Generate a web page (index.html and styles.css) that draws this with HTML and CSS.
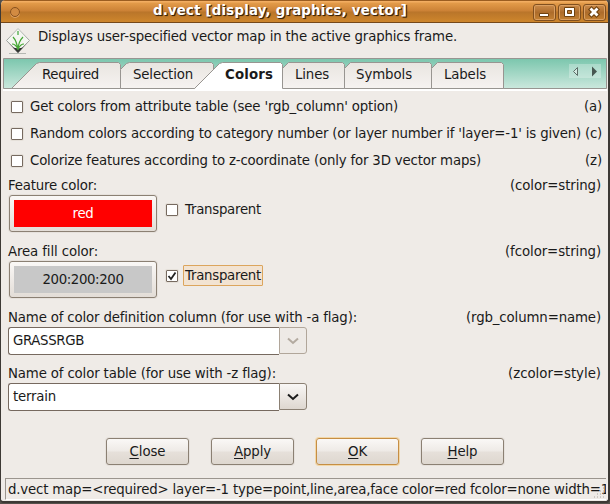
FILE: index.html
```
<!DOCTYPE html>
<html lang="en">
<head>
<meta charset="utf-8">
<title>d.vect [display, graphics, vector]</title>
<link rel="stylesheet" href="styles.css">
</head>
<body>
<div class="window">
  <header class="titlebar">
    <span class="menu-dot"></span>
    <h1 class="title"><span class="t" style="--w:254px">d.vect [display, graphics, vector]</span></h1>
    <div class="controls">
      <button class="control" aria-label="Minimize"><svg width="21" height="15" viewBox="0 0 21 15"><path d="M5.500 8.500h9v3h-9z" fill="#fff" stroke="#70420f"/></svg></button>
      <button class="control" aria-label="Maximize"><svg width="21" height="15" viewBox="0 0 21 15"><path d="M5.500 2.500h10v9h-10z" fill="#fff" stroke="#70420f"/><path d="M8.500 5.500h4v3h-4z" fill="#bc7830" stroke="#70420f"/></svg></button>
      <button class="control" aria-label="Close window"><svg width="21" height="15" viewBox="0 0 21 15"><path d="M7.500 4.500l5 5M12.500 4.500l-5 5" stroke="#70420f" stroke-width="5" stroke-linecap="square"/><path d="M7.500 4.500l5 5M12.500 4.500l-5 5" stroke="#fff" stroke-width="2.800" stroke-linecap="square"/></svg></button>
    </div>
  </header>

  <div class="intro">
    <svg class="logo" width="26" height="30" viewBox="0 0 26 30">
      <defs><linearGradient id="edge" x2="0" y2="1"><stop offset="0" stop-color="#bcc2bc"/><stop offset=".6" stop-color="#999d99"/><stop offset="1" stop-color="#111"/></linearGradient></defs>
      <path d="M13 1.500 24.500 13.500 13 25.500 1.500 13.500z" fill="#f4f6f1" stroke="url(#edge)"/>
      <path d="M8 20.500l5 5 5-5-5 1z" fill="#303430"/>
      <path d="M13 23C12 16 10 12 8 10M13 22c-2-4-4-5-6-5M13 23c0-8 3-11 5-13M13 22c2-4 4-5 6-5" fill="none" stroke="#45a735" stroke-width="1.200"/>
      <path d="M13 4v4" stroke="#4cab48" stroke-width="1.300"/>
      <path d="M4 26.500h17" stroke="#b4b7b2" stroke-width="1.200"/>
    </svg>
    <p class="t" style="--w:419px">Displays user-specified vector map in the active graphics frame.</p>
  </div>

  <nav class="tabs">
    <svg class="tab-shapes" width="605" height="34" viewBox="0 0 605 34">
      <defs>
        <linearGradient id="strip" x2="0" y2="1"><stop stop-color="#7bc6ad"/><stop offset="1" stop-color="#cbe8dd"/></linearGradient>
        <linearGradient id="tab" x2="0" y2="1"><stop stop-color="#e9e5e0"/><stop offset="1" stop-color="#f6f3f1"/></linearGradient>
      </defs>
      <path d="M0 31h604v2H0z" fill="#fff"/>
      <path d="M.500.500h603v30H.500z" fill="url(#strip)" stroke="#989591"/>
      <g fill="url(#tab)" stroke="#989591">
        <path d="M8.500 30.500 33.500 5.500 36.500 4.500H115.500L117.500 6.500V30.500z"/>
        <path d="M117.500 30.500V11.500L123.500 5.500 126.500 4.500H208.500L210.500 6.500V30.500z"/>
        <path d="M279.500 30.500V10.500L285.500 4.500H339.500L341.500 6.500V30.500z"/>
        <path d="M341.500 30.500V10.500L347.500 4.500H426.500L428.500 6.500V30.500z"/>
        <path d="M428.500 30.500V10.500L434.500 4.500H498.500L500.500 6.500V30.500z"/>
      </g>
      <path d="M191.500 31 216.500 5.500 219.500 4.500H277.500L279.500 6.500V31z" fill="#fff"/>
      <path d="M210 30.500h69V32h-88l1-1.500z" fill="#fff"/>
      <path d="M191.500 30.500 216.500 5.500 219.500 4.500H277.500L279.500 6.500V30.500" fill="none" stroke="#989591"/>
      <path d="M566 6h32v14h-32z" fill="#fff" opacity=".28"/>
      <path d="M574.500 9.500v8l-4-4z" fill="#d3e9e1" stroke="#5c6d66"/>
      <path d="M589 8.500v10l5-5z" fill="#465750"/>
    </svg>
    <a class="tab required"><span class="t" style="--w:57px">Required</span></a>
    <a class="tab selection"><span class="t" style="--w:60px">Selection</span></a>
    <a class="tab colors"><span class="t" style="--w:48px">Colors</span></a>
    <a class="tab lines"><span class="t" style="--w:34px">Lines</span></a>
    <a class="tab symbols"><span class="t" style="--w:56px">Symbols</span></a>
    <a class="tab labels"><span class="t" style="--w:42px">Labels</span></a>
  </nav>

  <main class="panel">
    <label class="option"><i class="check"></i><span class="t" style="--w:368px">Get colors from attribute table (see 'rgb_column' option)</span><span class="key t" style="--w:18px">(a)</span></label>
    <label class="option"><i class="check"></i><span class="t" style="--w:551px">Random colors according to category number (or layer number if 'layer=-1' is given)</span><span class="key t" style="--w:17px">(c)</span></label>
    <label class="option"><i class="check"></i><span class="t" style="--w:451px">Colorize features according to z-coordinate (only for 3D vector maps)</span><span class="key t" style="--w:17px">(z)</span></label>

    <section class="field color">
      <div class="caption"><span class="t" style="--w:89px">Feature color:</span><span class="key t" style="--w:91px">(color=string)</span></div>
      <div class="color-row">
        <button class="swatch-button"><span class="swatch red"><span class="t" style="--w:21px">red</span></span></button>
        <label class="transparent"><i class="check"></i><span class="choice"><span class="t" style="--w:76px">Transparent</span></span></label>
      </div>
    </section>
    <section class="field color">
      <div class="caption"><span class="t" style="--w:90px">Area fill color:</span><span class="key t" style="--w:96px">(fcolor=string)</span></div>
      <div class="color-row">
        <button class="swatch-button"><span class="swatch gray"><span class="t" style="--w:81px">200:200:200</span></span></button>
        <label class="transparent"><i class="check"><svg width="10" height="10" viewBox="0 0 10 10"><path d="M1.500 5 4 8 8.500 1.500" fill="none" stroke="#222" stroke-width="1.800"/></svg></i><span class="choice focused"><span class="t" style="--w:76px">Transparent</span></span></label>
      </div>
    </section>
    <section class="field select">
      <div class="caption"><span class="t" style="--w:349px">Name of color definition column (for use with -a flag):</span><span class="key t" style="--w:135px">(rgb_column=name)</span></div>
      <div class="combo"><div class="entry"><span class="t" style="--w:71px">GRASSRGB</span></div><button class="arrow disabled" aria-label="Choose column"><svg width="12" height="8" viewBox="0 0 12 8"><path d="M1 1.500 6 6 11 1.500"/></svg></button></div>
    </section>
    <section class="field select">
      <div class="caption"><span class="t" style="--w:268px">Name of color table (for use with -z flag):</span><span class="key t" style="--w:93px">(zcolor=style)</span></div>
      <div class="combo"><div class="entry"><span class="t" style="--w:43px">terrain</span></div><button class="arrow" aria-label="Choose color table"><svg width="12" height="8" viewBox="0 0 12 8"><path d="M1 1.500 6 6 11 1.500"/></svg></button></div>
    </section>
  </main>

  <div class="actions">
    <button class="action"><span class="t" style="--w:36px"><u>C</u>lose</span></button>
    <button class="action"><span class="t" style="--w:37px"><u>A</u>pply</span></button>
    <button class="action default"><span class="t" style="--w:19px"><u>O</u>K</span></button>
    <button class="action"><span class="t" style="--w:30px"><u>H</u>elp</span></button>
  </div>

  <footer class="status">
    <span class="status-text"><span class="t" style="--w:601px">d.vect map=&lt;required&gt; layer=-1 type=point,line,area,face color=red fcolor=none width=1</span></span>
    <svg class="grip" width="12" height="12" viewBox="0 0 12 12"><path d="M9 1h1M6 4h1M9 4h1M3 7h1M6 7h1M9 7h1M0 10h1M3 10h1M6 10h1M9 10h1" stroke="#aaa49c"/></svg>
  </footer>
</div>
<script src="script.js"></script>
</body>
</html>
```
FILE: styles.css
```
* { box-sizing: border-box; }
body { margin: 0; width: 610px; height: 504px; overflow: hidden; background: #55504a; font: 13.33px/16px "DejaVu Sans", sans-serif; color: #1a1a1a; }
button { padding: 0; margin: 0; font: inherit; color: inherit; }
h1, p { margin: 0; }
.t { display: inline-block; flex: none; white-space: pre; line-height: 16px; width: var(--w); }
.window { width: 610px; height: 503px; display: flex; flex-direction: column; background: #efebe7; border: solid #3d3935; border-width: 0 2px 2px 1px; border-radius: 5px 5px 4px 4px; overflow: hidden; }
.titlebar { display: flex; align-items: center; flex: none; height: 23px; border-top: 1px solid #9b5d20; border-bottom: 1px solid #754819; background: linear-gradient(#f2ad61 0 1px, #e39b49 2px, #cb8135 10px, #b9752a 11px, #ce862c 21px); }
.menu-dot { width: 10px; height: 10px; margin-left: 9px; border: 1px solid #87511e; border-radius: 50%; background: #d28b42; box-shadow: 0 1px #e2a463; }
.title { margin-left: 133px; font: bold 13.33px/16px "DejaVu Sans", sans-serif; color: #fff; text-shadow: 1px 1px 1px #3c2208, 1px 1px #513112; padding-bottom: 1px; }
.controls { display: flex; gap: 2px; margin: 1px 2px 0 auto; }
.control { display: flex; width: 23px; height: 17px; border: 1px solid #814f1e; border-radius: 3px; background: linear-gradient(#cd8c4b, #ad6c2b 50%, #c48132); box-shadow: inset 0 0 0 1px #dba062; }
.control svg { display: block; flex: none; }
.intro { display: flex; flex: none; height: 35px; padding: 6px 0 0 37px; position: relative; }
.logo { position: absolute; left: 4px; top: 4px; }
.tabs { position: relative; display: flex; flex: none; height: 34px; margin-left: 2px; width: 605px; }
.tab-shapes { position: absolute; left: 0; top: 0; }
.tab { position: relative; padding-top: 9px; }
.required { width: 117px; padding-left: 39px; }
.selection { width: 93px; padding-left: 13px; }
.colors { width: 69px; padding-left: 12px; font-weight: bold; }
.lines { width: 62px; padding-left: 13px; }
.symbols { width: 87px; padding-left: 12px; }
.labels { padding-left: 13px; }
.panel { flex: none; height: 346px; padding: 1px 7px 0 7px; }
.option { display: flex; align-items: center; height: 27px; padding-left: 3px; margin-right: -1px; }
.check { flex: none; width: 12px; height: 12px; margin-right: 7px; border: 1px solid #766a60; border-radius: 1px; background: #fff; box-shadow: 0 0 0 1px #e5e0d9; }
.check svg { display: block; }
.key { margin-left: auto; }
.field.color { height: 66px; padding-top: 3px; }
.field.select { height: 56px; padding-top: 3px; }
.caption { display: flex; height: 18px; padding-top: 1px; line-height: 16px; }
.color-row { display: flex; padding-left: 1px; }
.swatch-button { width: 148px; height: 37px; padding: 4px; border: 1px solid #8b8073; border-radius: 3px; background: linear-gradient(#faf8f6, #e3ddd7); box-shadow: 0 0 0 1px #e6e1dc; }
.swatch { display: flex; align-items: center; justify-content: center; width: 138px; height: 27px; }
.red { background: #f00; color: #fff; }
.gray { background: #c8c8c8; }
.transparent { display: flex; align-items: center; height: 30px; padding-left: 9px; }
.transparent .check { margin-right: 5px; }
.choice { height: 21px; width: 80px; margin-top: -1px; padding: 2px 1px 1px; border: 1px solid transparent; border-radius: 1px; }
.focused { background: #f2e3d2; border-color: #dca55d; }
.combo { display: flex; width: 299px; height: 28px; }
.entry { width: 271px; border: 1px solid #76695f; border-right: 0; border-radius: 3px 0 0 3px; background: #fff; padding: 5px 4px; }
.arrow { display: flex; align-items: center; justify-content: center; width: 28px; height: 27px; border: 1px solid #8b8073; border-radius: 0 3px 3px 0; background: linear-gradient(#f9f7f5, #ded7d0); }
.arrow path { fill: none; stroke: #1b1b1b; stroke-width: 2; }
.arrow.disabled { border-color: #b1a69a; background: #eeeae6; }
.arrow.disabled path { stroke: #b3aaa0; }
.actions { display: flex; flex: none; gap: 22px; height: 40px; padding-left: 105px; }
.action { width: 83px; height: 27px; border: 1px solid #8b8073; border-radius: 3px; background: linear-gradient(#faf8f6, #eeeae6 48%, #e6e0da 52%, #ded7cf); box-shadow: 0 0 0 1px #e6e1dc; }
.action u { text-decoration-thickness: 1px; text-underline-offset: 2px; }
.action.default { border-color: #c68e44; box-shadow: 0 0 0 1px #f2d7a8; }
.status { position: relative; flex: none; height: 22px; width: 601px; margin-left: 4px; border: solid #9b958e; border-width: 1px 0 0 1px; border-bottom: 1px solid #fff; overflow: hidden; }
.status-text { display: block; padding: 3px 0 0 2px; }
.grip { position: absolute; right: 0; bottom: 0; }
```
FILE: script.js
```
// Fit each label's tracking to its column width.
document.querySelectorAll('.t').forEach(el => {
  const range = document.createRange();
  range.selectNodeContents(el);
  const width = range.getBoundingClientRect().width;
  const count = el.textContent.length;
  el.style.letterSpacing = ((parseFloat(getComputedStyle(el).width) - width) / count) + 'px';
});
```
